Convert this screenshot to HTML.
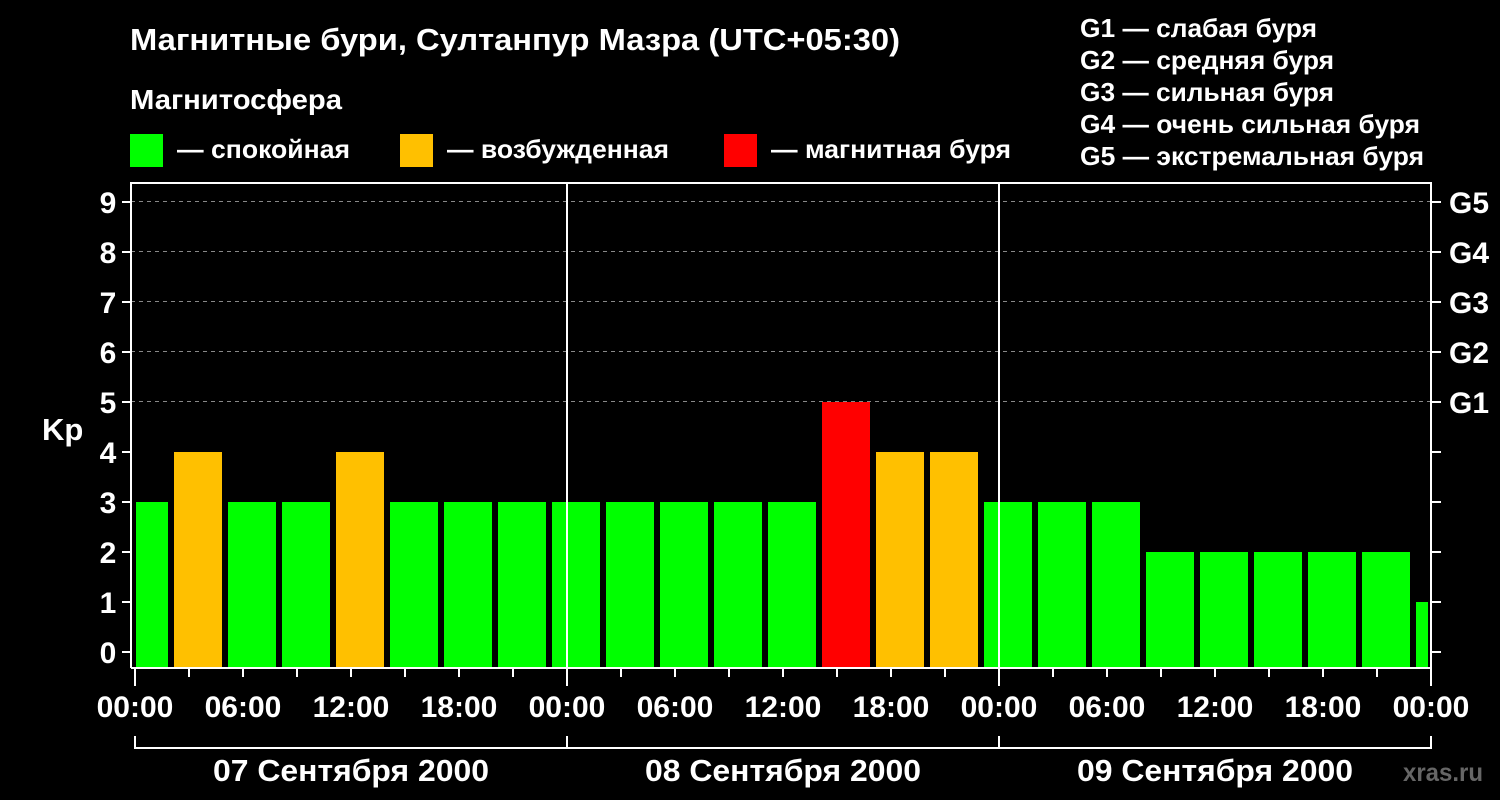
<!DOCTYPE html>
<html><head><meta charset="utf-8"><style>
body{margin:0;background:#000;width:1500px;height:800px;overflow:hidden}
svg{display:block}
text{font-family:"Liberation Sans",Arial,sans-serif;font-weight:bold;fill:#fff}
</style></head><body>
<svg width="1500" height="800" viewBox="0 0 1500 800" font-family="Liberation Sans, Arial, sans-serif" font-weight="bold">
<text x="130" y="50" font-size="31" textLength="770" lengthAdjust="spacingAndGlyphs">Магнитные бури, Султанпур Мазра (UTC+05:30)</text>
<text x="130" y="109" font-size="28" textLength="212" lengthAdjust="spacingAndGlyphs">Магнитосфера</text>
<rect x="130" y="134" width="33" height="33" fill="#00ff00"/>
<text x="177" y="158" font-size="26" textLength="173" lengthAdjust="spacingAndGlyphs">— спокойная</text>
<rect x="400" y="134" width="33" height="33" fill="#ffc000"/>
<text x="447" y="158" font-size="26" textLength="222" lengthAdjust="spacingAndGlyphs">— возбужденная</text>
<rect x="724" y="134" width="33" height="33" fill="#ff0000"/>
<text x="771" y="158" font-size="26" textLength="240" lengthAdjust="spacingAndGlyphs">— магнитная буря</text>
<g font-size="26">
<text x="1080" y="37" textLength="237" lengthAdjust="spacingAndGlyphs">G1 — слабая буря</text>
<text x="1080" y="69" textLength="254" lengthAdjust="spacingAndGlyphs">G2 — средняя буря</text>
<text x="1080" y="101" textLength="254" lengthAdjust="spacingAndGlyphs">G3 — сильная буря</text>
<text x="1080" y="133" textLength="340" lengthAdjust="spacingAndGlyphs">G4 — очень сильная буря</text>
<text x="1080" y="165" textLength="344" lengthAdjust="spacingAndGlyphs">G5 — экстремальная буря</text>
</g>
<g stroke="#888" stroke-width="1" stroke-dasharray="4,4">
<line x1="131" x2="1431" y1="201.5" y2="201.5"/>
<line x1="131" x2="1431" y1="251.5" y2="251.5"/>
<line x1="131" x2="1431" y1="301.5" y2="301.5"/>
<line x1="131" x2="1431" y1="351.5" y2="351.5"/>
<line x1="131" x2="1431" y1="401.5" y2="401.5"/>
</g>
<g>
<rect x="136" y="502" width="32" height="165" fill="#00ff00"/>
<rect x="174" y="452" width="48" height="215" fill="#ffc000"/>
<rect x="228" y="502" width="48" height="165" fill="#00ff00"/>
<rect x="282" y="502" width="48" height="165" fill="#00ff00"/>
<rect x="336" y="452" width="48" height="215" fill="#ffc000"/>
<rect x="390" y="502" width="48" height="165" fill="#00ff00"/>
<rect x="444" y="502" width="48" height="165" fill="#00ff00"/>
<rect x="498" y="502" width="48" height="165" fill="#00ff00"/>
<rect x="552" y="502" width="48" height="165" fill="#00ff00"/>
<rect x="606" y="502" width="48" height="165" fill="#00ff00"/>
<rect x="660" y="502" width="48" height="165" fill="#00ff00"/>
<rect x="714" y="502" width="48" height="165" fill="#00ff00"/>
<rect x="768" y="502" width="48" height="165" fill="#00ff00"/>
<rect x="822" y="402" width="48" height="265" fill="#ff0000"/>
<rect x="876" y="452" width="48" height="215" fill="#ffc000"/>
<rect x="930" y="452" width="48" height="215" fill="#ffc000"/>
<rect x="984" y="502" width="48" height="165" fill="#00ff00"/>
<rect x="1038" y="502" width="48" height="165" fill="#00ff00"/>
<rect x="1092" y="502" width="48" height="165" fill="#00ff00"/>
<rect x="1146" y="552" width="48" height="115" fill="#00ff00"/>
<rect x="1200" y="552" width="48" height="115" fill="#00ff00"/>
<rect x="1254" y="552" width="48" height="115" fill="#00ff00"/>
<rect x="1308" y="552" width="48" height="115" fill="#00ff00"/>
<rect x="1362" y="552" width="48" height="115" fill="#00ff00"/>
<rect x="1416" y="602" width="12" height="65" fill="#00ff00"/>
</g>
<g stroke="#fff" stroke-width="2" fill="none">
<polyline points="131,668 131,183 1431,183 1431,668 131,668"/>
<line x1="567" y1="183" x2="567" y2="668"/>
<line x1="999" y1="183" x2="999" y2="668"/>
<path d="M135,736V748H1431V736M567,736V748M999,736V748"/>
<path d="M122,652H131M122,602H131M122,552H131M122,502H131M122,452H131M122,402H131M122,352H131M122,302H131M122,252H131M122,202H131"/>
<path d="M1431,652H1441M1431,602H1441M1431,552H1441M1431,502H1441M1431,452H1441M1431,402H1441M1431,352H1441M1431,302H1441M1431,252H1441M1431,202H1441"/>
<path d="M135,668V686M189,668V677M243,668V677M297,668V677M351,668V677M405,668V677M459,668V677M513,668V677M567,668V686M621,668V677M675,668V677M729,668V677M783,668V677M837,668V677M891,668V677M945,668V677M999,668V686M1053,668V677M1107,668V677M1161,668V677M1215,668V677M1269,668V677M1323,668V677M1377,668V677M1431,668V686"/>
</g>
<g font-size="30" text-anchor="middle">
<text x="108" y="663">0</text><text x="108" y="613">1</text><text x="108" y="563">2</text><text x="108" y="513">3</text><text x="108" y="463">4</text><text x="108" y="413">5</text><text x="108" y="363">6</text><text x="108" y="313">7</text><text x="108" y="263">8</text><text x="108" y="213">9</text>
</g>
<g font-size="30">
<text x="1449" y="413">G1</text><text x="1449" y="363">G2</text><text x="1449" y="313">G3</text><text x="1449" y="263">G4</text><text x="1449" y="213">G5</text>
</g>
<g font-size="30" text-anchor="middle">
<text x="135" y="717">00:00</text><text x="243" y="717">06:00</text><text x="351" y="717">12:00</text><text x="459" y="717">18:00</text>
<text x="567" y="717">00:00</text><text x="675" y="717">06:00</text><text x="783" y="717">12:00</text><text x="891" y="717">18:00</text>
<text x="999" y="717">00:00</text><text x="1107" y="717">06:00</text><text x="1215" y="717">12:00</text><text x="1323" y="717">18:00</text>
<text x="1431" y="717">00:00</text>
</g>
<g font-size="31" text-anchor="middle">
<text x="351" y="781" textLength="276" lengthAdjust="spacingAndGlyphs">07 Сентября 2000</text>
<text x="783" y="781" textLength="276" lengthAdjust="spacingAndGlyphs">08 Сентября 2000</text>
<text x="1215" y="781" textLength="276" lengthAdjust="spacingAndGlyphs">09 Сентября 2000</text>
</g>
<text x="42" y="440" font-size="31">Kp</text>
<text x="1403" y="781" font-size="25" style="fill:#666" textLength="80" lengthAdjust="spacingAndGlyphs">xras.ru</text>
</svg>
</body></html>
